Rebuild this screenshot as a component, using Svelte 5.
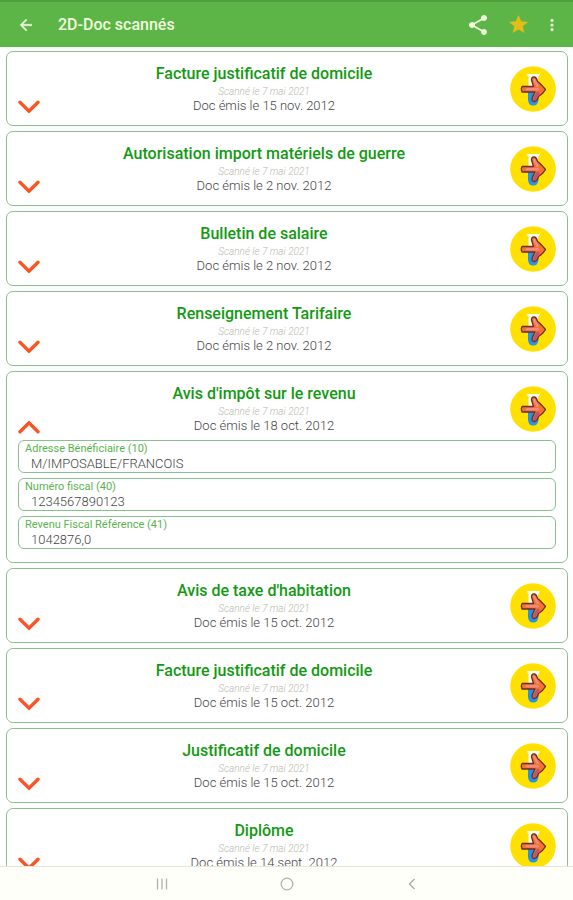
<script lang="ts">
	type Field = { label: string; value: string };
	type Doc = { id: number; title: string; issued: string; open: boolean; fields: Field[] };

	const scanned = 'Scanné le 7 mai 2021';

	let docs: Doc[] = [
		{ id: 1, title: 'Facture justificatif de domicile', issued: '15 nov. 2012', open: false, fields: [] },
		{ id: 2, title: 'Autorisation import matériels de guerre', issued: '2 nov. 2012', open: false, fields: [] },
		{ id: 3, title: 'Bulletin de salaire', issued: '2 nov. 2012', open: false, fields: [] },
		{ id: 4, title: 'Renseignement Tarifaire', issued: '2 nov. 2012', open: false, fields: [] },
		{
			id: 5,
			title: "Avis d'impôt sur le revenu",
			issued: '18 oct. 2012',
			open: true,
			fields: [
				{ label: 'Adresse Bénéficiaire (10)', value: 'M/IMPOSABLE/FRANCOIS' },
				{ label: 'Numéro fiscal (40)', value: '1234567890123' },
				{ label: 'Revenu Fiscal Référence (41)', value: '1042876,0' }
			]
		},
		{ id: 6, title: "Avis de taxe d'habitation", issued: '15 oct. 2012', open: false, fields: [] },
		{ id: 7, title: 'Facture justificatif de domicile', issued: '15 oct. 2012', open: false, fields: [] },
		{ id: 8, title: 'Justificatif de domicile', issued: '15 oct. 2012', open: false, fields: [] },
		{ id: 9, title: 'Diplôme', issued: '14 sept. 2012', open: false, fields: [] }
	];

	function toggle(i: number) {
		docs[i].open = !docs[i].open;
	}
</script>

<div class="screen">
	<header class="toolbar">
		<button class="icon-btn" aria-label="Retour">
			<svg width="12" height="12" viewBox="4 4 16 16" fill="#effbdc">
				<path d="M20 11H7.83l5.59-5.59L12 4l-8 8 8 8 1.41-1.41L7.83 13H20v-2z" stroke="#effbdc" stroke-width="0.5" />
			</svg>
		</button>
		<h1>2D-Doc scannés</h1>
		<div class="actions">
			<button class="icon-btn" aria-label="Partager">
				<svg width="20" height="20" viewBox="2 2 20 20" fill="#effbdc">
					<path
						d="M18 16.08c-.76 0-1.44.3-1.96.77L8.91 12.7c.05-.23.09-.46.09-.7s-.04-.47-.09-.7l7.05-4.11c.54.5 1.25.81 2.04.81 1.66 0 3-1.34 3-3s-1.34-3-3-3-3 1.34-3 3c0 .24.04.47.09.7L8.04 9.81C7.5 9.31 6.79 9 6 9c-1.66 0-3 1.34-3 3s1.34 3 3 3c.79 0 1.5-.31 2.04-.81l7.12 4.16c-.05.21-.08.43-.08.65 0 1.61 1.31 2.92 2.92 2.92s2.92-1.31 2.92-2.92-1.31-2.92-2.92-2.92z"
					/>
				</svg>
			</button>
			<button class="icon-btn" aria-label="Favoris">
				<svg width="19" height="19" viewBox="2 2 20 20" fill="#e3bc16">
					<path d="M12 17.27L18.18 21l-1.64-7.03L22 9.24l-7.19-.61L12 2 9.19 8.63 2 9.24l5.46 4.73L5.82 21z" />
				</svg>
			</button>
			<button class="icon-btn more" aria-label="Plus d'options">
				<svg width="4" height="14" viewBox="0 0 4 14" fill="#effbdc">
					<circle cx="2" cy="2.4" r="1.6" />
					<circle cx="2" cy="7" r="1.6" />
					<circle cx="2" cy="11.6" r="1.6" />
				</svg>
			</button>
		</div>
	</header>

	<main class="list">
		{#each docs as doc, i (doc.id)}
			<article class="card">
				<div class="summary">
					<div class="text">
						<h2>{doc.title}</h2>
						<p class="scanned">{scanned}</p>
						<p class="issued">Doc émis le {doc.issued}</p>
					</div>
					<button
						class="toggle"
						aria-label={doc.open ? 'Réduire' : 'Développer'}
						aria-expanded={doc.open}
						on:click={() => toggle(i)}
					>
						<svg class:up={doc.open} width="22" height="14" viewBox="0 0 22 14">
							<path d="M2 2.3L11 11.2L20 2.3" fill="none" stroke="#fb5325" stroke-width="3.4" stroke-linecap="round" />
						</svg>
					</button>
					<button class="go" aria-label="Ouvrir {doc.title}">
						<svg width="46" height="46" viewBox="0 0 46 46">
							<circle cx="23" cy="23" r="22.8" fill="#ffe000" />
							<path d="M17 8H30L28 12V25H18.5V12Z" fill="#fffdf0" />
							<path d="M18 25H28.5V34Q28 39.5 23 39.5Q18.5 39.5 18 34Z" fill="#2594e8" />
							<path
								d="M12 20.5H23.5L21.5 14Q21.5 10.5 24.5 11Q26.5 11.5 27.5 15.5Q30 17 35.5 23.5Q33 28 28.5 30.5Q27 35.5 24 35.5Q21 35 22.5 31L25 26H12Q10.5 23 12 20.5Z"
								fill="#f7702c"
								stroke="#653125"
								stroke-width="1.3"
								stroke-linejoin="round"
							/>
							<path d="M17 23.2H28M27.5 20L24.5 14" fill="none" stroke="#ef8a80" stroke-width="2.6" stroke-linecap="round" />
							<path d="M28 27L24.5 33" fill="none" stroke="#b8527c" stroke-width="2.8" stroke-linecap="round" />
						</svg>
					</button>
				</div>
				{#if doc.open && doc.fields.length}
					<dl class="fields">
						{#each doc.fields as field (field.label)}
							<div class="field">
								<dt>{field.label}</dt>
								<dd>{field.value}</dd>
							</div>
						{/each}
					</dl>
				{/if}
			</article>
		{/each}
	</main>

	<nav class="navbar">
		<button class="icon-btn" aria-label="Applications récentes">
			<svg width="12" height="12" viewBox="0 0 12 12" stroke="#b2b2a4" stroke-width="1.3">
				<path d="M1.5 0.5V11.5M6 0.5V11.5M10.5 0.5V11.5" />
			</svg>
		</button>
		<button class="icon-btn" aria-label="Accueil">
			<svg width="14" height="14" viewBox="0 0 14 14">
				<circle cx="7" cy="7" r="5.8" fill="none" stroke="#b2b2a4" stroke-width="1.3" />
			</svg>
		</button>
		<button class="icon-btn" aria-label="Précédent">
			<svg width="12" height="12" viewBox="0 0 12 12">
				<path d="M8.5 1L3.5 6L8.5 11" fill="none" stroke="#a9a99b" stroke-width="1.3" />
			</svg>
		</button>
	</nav>
</div>

<style>
	:global(body) {
		margin: 0;
		background: #fff;
	}
	.screen {
		display: flex;
		flex-direction: column;
		height: 100vh;
		font-family: Roboto, 'Liberation Sans', sans-serif;
	}
	button {
		padding: 0;
		border: 0;
		background: none;
		cursor: pointer;
	}
	svg {
		display: block;
	}
	.toolbar {
		display: flex;
		align-items: center;
		flex: none;
		box-sizing: border-box;
		height: 47px;
		padding: 0 15px 0 14px;
		border-top: 2px solid #50a03b;
		background: #5db548;
	}
	.icon-btn {
		display: grid;
		place-items: center;
		width: 24px;
		height: 24px;
	}
	h1 {
		margin: 0 0 0 20px;
		color: #effbdc;
		font-size: 16px;
		font-weight: 500;
		line-height: 20px;
	}
	.actions {
		display: flex;
		gap: 16px;
		margin-left: auto;
	}
	.more {
		width: 12px;
	}
	.list {
		display: flex;
		flex-direction: column;
		gap: 5px;
		flex: 1;
		min-height: 0;
		padding: 4px 5px 0 6px;
		overflow-y: auto;
		scrollbar-width: none;
	}
	.card {
		flex: none;
		padding: 11px;
		border: 1px solid #8ac08d;
		border-radius: 7px;
	}
	.summary {
		display: grid;
		grid-template-columns: 1fr 46px;
		align-items: center;
	}
	.text {
		grid-area: 1 / 1;
		text-align: center;
	}
	h2,
	p {
		margin: 0;
	}
	h2 {
		color: #129a12;
		font-size: 16px;
		font-weight: 500;
		line-height: 22px;
	}
	.scanned {
		color: #b9b9ad;
		font-size: 10px;
		font-style: italic;
		font-weight: 300;
		line-height: 13px;
	}
	.issued {
		color: #444;
		font-size: 13px;
		font-weight: 300;
		line-height: 16px;
	}
	.toggle {
		grid-area: 1 / 1;
		place-self: end start;
	}
	.up {
		transform: rotate(180deg);
	}
	.go {
		grid-area: 1 / 2;
		border-radius: 50%;
	}
	.fields {
		display: grid;
		gap: 5px;
		margin: 6px 0 2px;
	}
	.field {
		padding: 0 6px;
		border: 1px solid #8ac08d;
		border-radius: 6px;
	}
	dt {
		color: #5bb24f;
		font-size: 11px;
		line-height: 15px;
	}
	dd {
		margin: 0 0 0 6px;
		color: #444;
		font-size: 13px;
		font-weight: 300;
		line-height: 16px;
	}
	.navbar {
		display: flex;
		align-items: center;
		justify-content: center;
		gap: 101px;
		flex: none;
		box-sizing: border-box;
		height: 34px;
		border-top: 1px solid #e6e6d8;
		background: #fffffa;
	}
</style>
